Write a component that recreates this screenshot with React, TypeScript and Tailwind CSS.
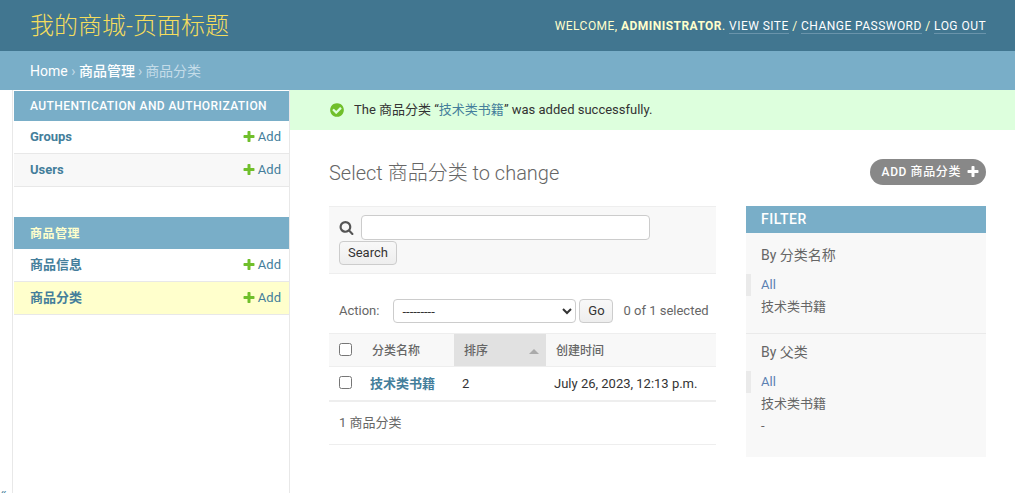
const font = '[font-family:Roboto,"Noto_Sans_CJK_SC",sans-serif]';

const plusPath =
  'M1600 736v192q0 40-28 68t-68 28h-416v416q0 40-28 68t-68 28h-192q-40 0-68-28t-28-68v-416h-416q-40 0-68-28t-28-68v-192q0-40 28-68t68-28h416v-416q0-40 28-68t68-28h192q40 0 68 28t28 68v416h416q40 0 68 28t28 68z';

const AddLink = () => (
  <a className="flex items-center text-[13px] text-[#447e9b]">
    <svg width="14" height="14" viewBox="0 0 1792 1792" className="mr-[2px]">
      <path fill="#70bf2b" d={plusPath} />
    </svg>
    Add
  </a>
);

const SideRow = ({ name, bg }: { name: string; bg: string }) => (
  <div className={`flex h-[33px] items-center justify-between border-b border-[#e8e8e8] pl-[16px] pr-2 ${bg}`}>
    <a className="text-[13px] font-bold text-[#447e9b]">{name}</a>
    <AddLink />
  </div>
);

const Sidebar = () => (
  <div className="ml-3 flex w-[278px] shrink-0 flex-col border-x border-[#e8e8e8] bg-white pl-px pt-px">
    <div className="flex h-[30px] items-center bg-[#79aec8] pl-[16px] text-[12px] font-medium tracking-[0.44px] text-white">
      AUTHENTICATION AND AUTHORIZATION
    </div>
    <SideRow name="Groups" bg="bg-white" />
    <SideRow name="Users" bg="bg-[#f8f8f8]" />
    <div className="mt-[30px] flex h-[32px] items-center bg-[#79aec8] pl-[16px] pt-[2px] text-[12px] font-bold tracking-[0.5px] text-[#ffffcc]">
      商品管理
    </div>
    <SideRow name="商品信息" bg="bg-white" />
    <SideRow name="商品分类" bg="bg-[#ffffcc]" />
  </div>
);

const ChangeList = () => (
  <div className="w-[387px]">
    <div className="border-y border-[#eeeeee] bg-[#f8f8f8] pb-[8px] pl-[10px] pt-[8px]">
      <div className="flex h-[25px] items-center">
        <svg width="15" height="15" viewBox="0 0 1792 1792" className="mr-[7px]">
          <path fill="#555555" d="M1216 832q0-185-131.500-316.500t-316.500-131.500-316.500 131.500-131.500 316.500 131.500 316.500 316.500 131.500 316.500-131.500 131.500-316.500zm512 832q0 52-38 90t-90 38q-54 0-90-38l-343-342q-179 124-399 124-143 0-273.500-55.500t-225-150-150-225-55.500-273.500 55.500-273.500 150-225 225-150 273.500-55.500 273.500 55.500 225 150 150 225 55.500 273.500q0 220-124 399l343 343q37 37 37 90z" />
        </svg>
        <input className="h-[25px] w-[289px] rounded border border-[#cccccc] bg-white" />
      </div>
      <button className="mt-px h-[24px] rounded border border-[#cccccc] bg-[linear-gradient(#f8f8f8,#eeeeee)] px-[8px] text-[13px] text-[#333333]">
        Search
      </button>
    </div>
    <div className="mt-[25px] flex h-[24px] items-center pl-[10px] text-[13px] text-[#666666]">
      <span>Action:</span>
      <select className="ml-[14px] h-[24px] w-[183px] rounded border border-[#cccccc] bg-white pl-[4px] text-[13px] text-[#333333]">
        <option>---------</option>
      </select>
      <button className="ml-[3px] h-[24px] w-[34px] rounded border border-[#cccccc] bg-[linear-gradient(#f8f8f8,#eeeeee)] text-[13px] text-[#333333]">
        Go
      </button>
      <span className="ml-[10px]">0 of 1 selected</span>
    </div>
    <div className="mt-[10px] flex h-[34px] items-stretch border-y border-[#eeeeee] bg-[#f8f8f8] text-[12px] font-medium text-[#666666]">
      <div className="flex w-[33px] items-center pb-[2px] pl-[10px]">
        <input type="checkbox" className="size-[13px]" />
      </div>
      <div className="flex w-[92px] items-center pl-[10px] pt-[2px]">分类名称</div>
      <div className="flex w-[92px] items-center justify-between bg-[#e1e1e1] pl-[10px] pr-[7px] pt-[2px]">
        排序
        <span className="size-0 border-x-[5px] border-b-[5px] border-x-transparent border-b-[#aaaaaa]" />
      </div>
      <div className="flex flex-1 items-center pl-[10px] pt-[2px]">创建时间</div>
    </div>
    <div className="flex h-[35px] items-center border-b-2 border-[#eeeeee] text-[13px] text-[#333333]">
      <div className="flex w-[41px] items-center pb-[2px] pl-[10px]">
        <input type="checkbox" className="size-[13px]" />
      </div>
      <a className="w-[92px] font-bold text-[#447e9b]">技术类书籍</a>
      <div className="w-[92px]">2</div>
      <div>July 26, 2023, 12:13 p.m.</div>
    </div>
    <div className="flex h-[43px] items-center border-b border-[#eeeeee] pb-px pl-[10px] text-[13px] text-[#666666]">
      1 商品分类
    </div>
  </div>
);

const FilterGroup = ({ title, items, last }: { title: string; items: string[]; last?: boolean }) => (
  <div className={last ? 'pb-[20px]' : 'border-b border-[#eaeaea] pb-[15px] pt-[4px]'}>
    <div className="flex h-[37px] items-center pl-[15px] text-[14px] text-[#666666]">{title}</div>
    <ul className="text-[13px] text-[#666666]">
      <li className="flex h-[22px] items-center border-l-[5px] border-[#eaeaea] pl-[10px] text-[#5b80b2]">All</li>
      {items.map((t) => (
        <li key={t} className="flex h-[22px] items-center pl-[15px]">{t}</li>
      ))}
    </ul>
  </div>
);

const Filter = () => (
  <div className="ml-[30px] w-[240px] bg-[#f8f8f8]">
    <div className="flex h-[27px] items-center bg-[#79aec8] pl-[15px] text-[14px] font-medium tracking-[0.5px] text-white">
      FILTER
    </div>
    <FilterGroup title="By 分类名称" items={['技术类书籍']} />
    <FilterGroup title="By 父类" items={['技术类书籍', '-']} last />
  </div>
);

export default function App() {
  return (
    <div className={`relative h-[493px] w-[1015px] overflow-hidden bg-white ${font}`}>
      <div className="flex h-[51px] items-center justify-between bg-[#417690] pl-[30px] pr-[29px]">
        <h1 className="text-[24px] font-light text-[#f5dd5d]">我的商城-页面标题</h1>
        <div className="text-[12px] font-normal tracking-[0.46px] text-[#ffffcc]">
          WELCOME, <strong className="font-bold">ADMINISTRATOR</strong>.{' '}
          <a className="border-b border-[#6a94ab] text-[#ffffff]">VIEW SITE</a> /{' '}
          <a className="border-b border-[#6a94ab] text-[#ffffff]">CHANGE PASSWORD</a> /{' '}
          <a className="border-b border-[#6a94ab] text-[#ffffff]">LOG OUT</a>
        </div>
      </div>
      <div className="flex h-[39px] items-center bg-[#79aec8] pl-[30px] pt-px text-[14px] text-[#c4dce8]">
        <a className="text-white">Home</a>
        <span className="mx-[3.5px]">›</span>
        <a className="font-medium text-white">商品管理</a>
        <span className="mx-[3px]">›</span>
        商品分类
      </div>
      <div className="flex h-[403px]">
        <Sidebar />
        <div className="flex-1">
          <div className="flex h-[40px] items-center bg-[#dfd] pl-[39px] text-[13px] text-[#333333]">
            <svg width="16" height="16" viewBox="0 0 1792 1792" className="mr-[9px]">
              <path fill="#70bf2b" d="M1412 734q0-28-18-46l-91-90q-19-19-45-19t-45 19l-408 407-226-226q-19-19-45-19t-45 19l-91 90q-18 18-18 46 0 27 18 45l362 362q19 19 45 19 27 0 46-19l543-543q18-18 18-45zm252 162q0 209-103 385.500t-279.500 279.500-385.500 103-385.500-103-279.500-279.500-103-385.500 103-385.500 279.500-279.500 385.500-103 385.500 103 279.500 279.500 103 385.500z" />
            </svg>
            <span>
              The 商品分类 “<a className="text-[#447e9b]">技术类书籍</a>” was added successfully.
            </span>
          </div>
          <div className="pl-[39px] pr-[29px]">
            <div className="flex h-[76px] items-center justify-between pt-[10px]">
              <h2 className="text-[20px] font-light text-[#666666]">Select 商品分类 to change</h2>
              <a className="mb-[2px] flex h-[26px] items-center rounded-[13px] bg-[#888888] pl-[12px] pr-[6px] text-[12px] font-medium tracking-[0.6px] text-white">
                ADD 商品分类
                <svg width="14" height="14" viewBox="0 0 1792 1792" className="ml-[5px]">
                  <path fill="#ffffff" d={plusPath} />
                </svg>
              </a>
            </div>
            <div className="flex items-start">
              <ChangeList />
              <Filter />
            </div>
          </div>
        </div>
      </div>
      <span className="absolute left-0 top-[485px] text-[14px] leading-[16px] text-[#447e9b]">«</span>
    </div>
  );
}
